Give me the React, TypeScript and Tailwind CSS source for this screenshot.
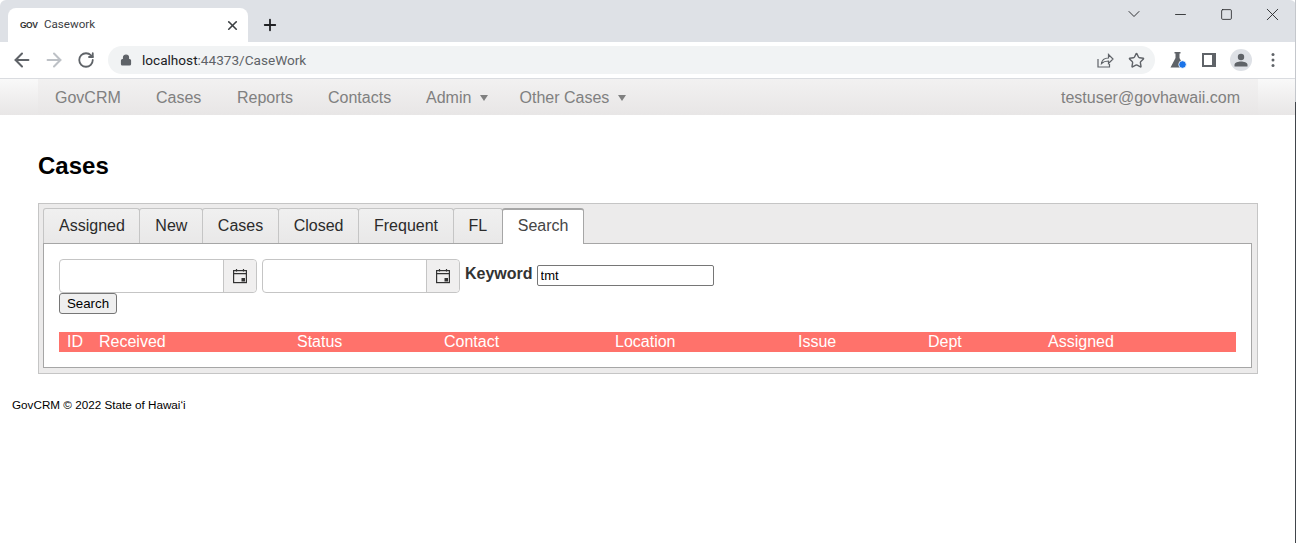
import { ArrowLeft, ArrowRight, ChevronDown, Lock, Minus, Plus, RotateCw, Square, Star, X } from "lucide-react";

const navItems = [
  { label: "GovCRM", width: "w-[101px]" },
  { label: "Cases", width: "w-[81px]" },
  { label: "Reports", width: "w-[91px]" },
  { label: "Contacts", width: "w-[98px]" },
  { label: "Admin", width: "w-[93.500px]", caret: true },
  { label: "Other Cases", width: "w-[130px]", caret: true },
];

const tabs = ["Assigned", "New", "Cases", "Closed", "Frequent", "FL"];

const columns = [
  { label: "ID", width: "w-[32px]" },
  { label: "Received", width: "w-[198px]" },
  { label: "Status", width: "w-[147px]" },
  { label: "Contact", width: "w-[171px]" },
  { label: "Location", width: "w-[183px]" },
  { label: "Issue", width: "w-[130px]" },
  { label: "Dept", width: "w-[120px]" },
  { label: "Assigned", width: "w-[100px]" },
];

function CalendarIcon() {
  return (
    <svg width="16" height="16" viewBox="0 0 16 16" fill="none" stroke="#333" strokeWidth="1.200">
      <rect x="1.600" y="2.600" width="12.800" height="12" />
      <path d="M1.600 5.600h12.800M4.500 1v2.500M11.500 1v2.500" />
      <rect x="9.500" y="10" width="3.500" height="3.500" fill="#333" stroke="none" />
    </svg>
  );
}

function DateInput({ width }: { width: string }) {
  return (
    <div className={`flex h-[34px] ${width} border border-[#c5c5c5] rounded-[4px] bg-white`}>
      <div className="flex-1" />
      <div className="flex w-[33px] items-center justify-center border-l border-[#c5c5c5] bg-[#f0efef] rounded-r-[4px]">
        <CalendarIcon />
      </div>
    </div>
  );
}

function ShareIcon() {
  return (
    <svg width="18" height="18" viewBox="0 0 18 18" fill="none" stroke="#5f6368" strokeWidth="1.200">
      <path d="M2 8v8h11.500v-3" />
      <path d="M5.500 12.500c.5-4 3.500-5.500 7-5.500V3.500L17 8l-4.500 4.500V10c-3 0-5 .5-7 2.500z" />
    </svg>
  );
}

function FlaskIcon() {
  return (
    <svg width="18" height="18" viewBox="0 0 18 18">
      <path d="M5.500 1h6v1.500h-1V7l5 9.500H1.500l5-9.500V2.500h-1z" fill="#5f6368" />
      <circle cx="13.500" cy="13.500" r="3.800" fill="#1a73e8" stroke="white" strokeWidth="0.800" />
    </svg>
  );
}

function AvatarIcon() {
  return (
    <svg width="14" height="14" viewBox="0 0 14 14" fill="#5f6368">
      <circle cx="7" cy="4" r="3.200" />
      <path d="M0.500 13.500v-1.700c0-2.200 3.800-3.300 6.500-3.300s6.500 1.100 6.500 3.300v1.700z" />
    </svg>
  );
}

function DotsIcon() {
  return (
    <svg width="16" height="16" viewBox="0 0 16 16" fill="#5f6368">
      <circle cx="8" cy="2.500" r="1.500" />
      <circle cx="8" cy="8" r="1.500" />
      <circle cx="8" cy="13.500" r="1.500" />
    </svg>
  );
}

export default function App() {
  return (
    <div className="relative h-[543px] bg-white font-['Liberation_Sans',Arial,sans-serif] text-[#212529] overflow-hidden">
      {/* window edge on the right */}
      <div className="absolute right-0 top-0 h-[102px] w-px bg-[#c4c7cc]" />
      <div className="absolute right-0 top-[102px] bottom-0 w-px bg-[#41454b]" />

      {/* browser chrome */}
      <div className="flex h-[42px] bg-[#dee1e6] rounded-t-[6px] pl-2 pt-2 font-['Roboto','Liberation_Sans',sans-serif]">
        <div className="flex h-[34px] w-[240px] items-center bg-white rounded-t-[8px] pl-3 pr-[8px]">
          <span className="w-[24px] text-[8.500px] font-bold tracking-[-0.500px] text-[#333] font-['Liberation_Sans',sans-serif]">GOV</span>
          <span className="flex-1 text-[11.600px] text-[#3c4043]">Casework</span>
          <X size={15} strokeWidth={2.600} className="text-[#3c4043]" />
        </div>
        <div className="flex h-[34px] w-[44px] items-center justify-center">
          <Plus size={18} strokeWidth={2.400} className="text-[#202124]" />
        </div>
        <div className="flex-1" />
        <div className="flex h-[28px] -mt-2 pr-px items-center text-[#202124]">
          <div className="flex w-[46px] justify-center"><ChevronDown size={20} strokeWidth={1.100} /></div>
          <div className="flex w-[46px] justify-center"><Minus size={17} strokeWidth={1.200} /></div>
          <div className="flex w-[46px] justify-center"><Square size={13} strokeWidth={1.500} /></div>
          <div className="flex w-[46px] justify-center"><X size={21} strokeWidth={1} /></div>
        </div>
      </div>
      <div className="flex h-[36px] items-center bg-white border-b border-[#dadce0] box-content font-['Roboto','Liberation_Sans',sans-serif]">
        <div className="flex w-[108px] items-center pl-[6px]">
          <div className="flex w-[32px] justify-center"><ArrowLeft size={22} strokeWidth={2.200} className="text-[#5f6368]" /></div>
          <div className="flex w-[32px] justify-center"><ArrowRight size={22} strokeWidth={2.200} className="text-[#bdc1c6]" /></div>
          <div className="flex w-[32px] justify-center"><RotateCw size={18} strokeWidth={2.400} className="text-[#5f6368]" /></div>
        </div>
        <div className="flex h-[28px] w-[1047px] items-center rounded-full bg-[#f1f3f4] pl-[12px] pr-[9px]">
          <Lock size={12} fill="#5f6368" strokeWidth={2.400} className="text-[#5f6368]" />
          <span className="ml-[10px] flex-1 text-[13.600px] text-[#5f6368]">
            <span className="text-[#202124]">localhost</span>:44373/CaseWork
          </span>
          <div className="-ml-px"><ShareIcon /></div>
          <Star size={17} strokeWidth={2} className="ml-[14px] mr-px text-[#5f6368]" />
        </div>
        <div className="flex flex-1 items-center pl-[14px]">
          <FlaskIcon />
          <div className="ml-[15px] h-[14px] w-[14px] border-2 border-r-[4px] border-[#5f6368]" />
          <div className="ml-[14px] flex h-[22px] w-[22px] items-center justify-center rounded-full bg-[#dee1e6]">
            <AvatarIcon />
          </div>
          <div className="ml-[13px]"><DotsIcon /></div>
        </div>
      </div>

      {/* navbar */}
      <div className="h-[36px] bg-gradient-to-b from-[#f9f9f9] to-[#e8e6e6]">
        <div className="mx-[38px] flex h-full items-center bg-gradient-to-b from-[#f2f1f1] to-[#e8e6e6] pl-[17px] pr-[18px] pt-px text-[16px] text-[#808080]">
          {navItems.map((item) => (
            <div key={item.label} className={`flex items-center ${item.width}`}>
              {item.label}
              {item.caret && (
                <span className="ml-[9px] h-0 w-0 border-x-[4px] border-t-[6px] border-x-transparent border-t-[#808080]" />
              )}
            </div>
          ))}
          <div className="ml-auto">testuser@govhawaii.com</div>
        </div>
      </div>

      <div className="px-[38px]">
        <h1 className="mt-[38px] h-[26px] text-[24px] leading-[26px] font-bold text-black">Cases</h1>

        {/* tab panel */}
        <div className="mt-[24px] h-[171px] border border-[#c5c5c5] bg-[#ecebeb] pl-1 pt-1 pr-[5px] pb-[5px] flex flex-col">
          <div className="flex h-[35px] items-start">
            {tabs.map((tab) => (
              <div
                key={tab}
                className="flex h-[35px] items-center border border-b-0 -mr-px border-[#c5c5c5] rounded-t-[3px] bg-gradient-to-b from-[#f0f0f0] to-[#e9e8e8] pl-[15px] pr-[14.500px] text-[16px] text-[#2b2b2b]"
              >
                {tab}
              </div>
            ))}
            <div className="relative z-10 flex h-[36px] items-center border border-b-0 border-[#a6a6a6] border-t-2 rounded-t-[3px] bg-white px-[15px] pb-[2px] text-[16px] text-[#454545]">
              Search
            </div>
          </div>
          <div className="flex-1 border border-[#a6a6a6] bg-white px-[15px] pt-[15px]">
            <div className="flex h-[34px]">
              <DateInput width="w-[198px]" />
              <div className="ml-[5px]">
                <DateInput width="w-[198px]" />
              </div>
              <span className="ml-[5px] mt-[5px] text-[16px] font-bold leading-[20px] text-[#333]">Keyword</span>
              <input
                readOnly
                value="tmt"
                className="ml-[4px] mt-[6px] h-[21px] w-[177px] border border-[#767676] rounded-[2px] bg-white px-[3px] text-[13px] text-black outline-none"
              />
            </div>
            <button className="block h-[21px] w-[58px] border border-[#767676] rounded-[3px] bg-[#efefef] text-[13.300px] leading-[19px] text-black">
              Search
            </button>
            <div className="mt-[18px] flex h-[20px] items-center bg-[#ff726b] pl-[8px] text-[16px] text-white">
              {columns.map((col) => (
                <div key={col.label} className={col.width}>
                  {col.label}
                </div>
              ))}
            </div>
          </div>
        </div>
      </div>

      <footer className="mt-[24px] pl-[12px] text-[11.700px] leading-[14px] text-black">GovCRM © 2022 State of Hawaiʻi</footer>
    </div>
  );
}
